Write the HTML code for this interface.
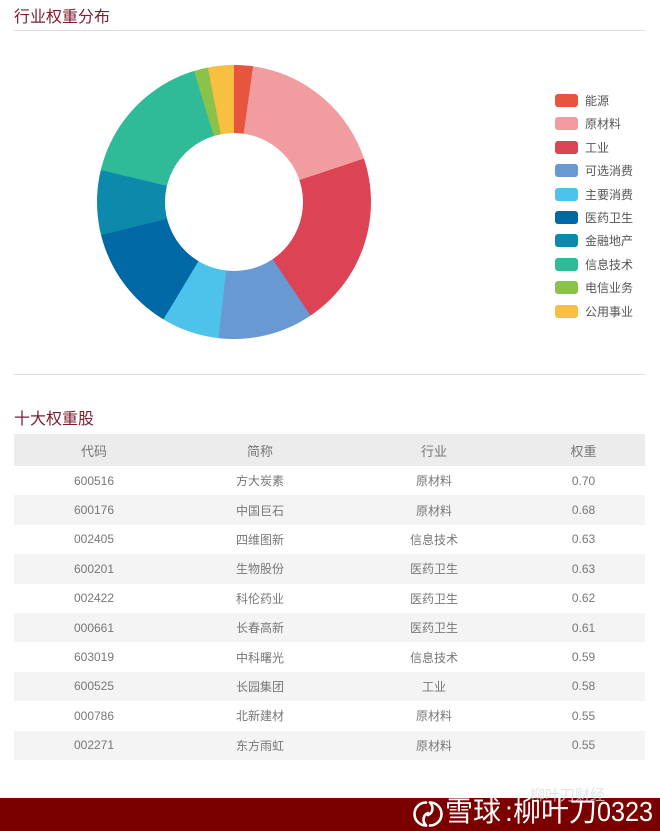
<!DOCTYPE html>
<html><head><meta charset="utf-8"><style>
*{margin:0;padding:0;box-sizing:border-box}
body{width:660px;height:831px;background:#fff;font-family:"Liberation Sans","Noto Sans CJK SC",sans-serif;position:relative;overflow:hidden;color:#666}
.t{position:absolute;left:14px;font-size:16px;color:#7b2030}
.hr{position:absolute;left:14px;width:631px;height:1px;background:#ddd}
.donut{position:absolute;left:97px;top:65px;width:274px;height:274px;border-radius:50%;
background:conic-gradient(#e8553f 0 8deg,#f19c9f 8deg 71.5deg,#dc4355 71.5deg 146deg,#6899d3 146deg 186.5deg,#4dc3eb 186.5deg 211deg,#0068a5 211deg 256deg,#0d8aab 256deg 283.5deg,#2fbb97 283.5deg 343deg,#8bc34a 343deg 349deg,#f8c040 349deg 360deg)}
.hole{position:absolute;left:68px;top:68px;width:138px;height:138px;border-radius:50%;background:#fff}
.lg{position:absolute;left:555px;font-size:12px;color:#555;line-height:14px}
.lg i{display:inline-block;width:23px;height:13px;border-radius:3px;vertical-align:-2px;margin-right:7px}
table{position:absolute;left:14px;top:434px;width:631px;border-collapse:collapse;font-size:12px;color:#777}
th{height:32px;background:#ececec;font-weight:normal;font-size:13px;color:#777}
td{height:29.4px;text-align:center}
table tr:nth-child(2n) td{background:#fff}
table tr:nth-child(2n+1) td{background:#f4f4f4}
.ft{position:absolute;left:0;top:798px;width:660px;height:33px;background:#7a0000}
.fx{position:absolute;top:795px;font-size:28px;line-height:34px;color:#fff;white-space:nowrap}
</style></head><body>
<div class="t" style="top:3px">行业权重分布</div>
<div class="hr" style="top:30px"></div>
<div class="donut"><div class="hole"></div></div>
<div class="lg" style="top:94px"><i style="background:#e8553f"></i>能源</div>
<div class="lg" style="top:117px"><i style="background:#f19c9f"></i>原材料</div>
<div class="lg" style="top:141px"><i style="background:#dc4355"></i>工业</div>
<div class="lg" style="top:164px"><i style="background:#6899d3"></i>可选消费</div>
<div class="lg" style="top:188px"><i style="background:#4dc3eb"></i>主要消费</div>
<div class="lg" style="top:211px"><i style="background:#0068a5"></i>医药卫生</div>
<div class="lg" style="top:234px"><i style="background:#0d8aab"></i>金融地产</div>
<div class="lg" style="top:258px"><i style="background:#2fbb97"></i>信息技术</div>
<div class="lg" style="top:281px"><i style="background:#8bc34a"></i>电信业务</div>
<div class="lg" style="top:305px"><i style="background:#f8c040"></i>公用事业</div>
<div class="hr" style="top:374px"></div>
<div class="t" style="top:405px">十大权重股</div>
<table>
<tr><th style="width:160px">代码</th><th style="width:172px">简称</th><th style="width:176px">行业</th><th>权重</th></tr>
<tr><td>600516</td><td>方大炭素</td><td>原材料</td><td>0.70</td></tr>
<tr><td>600176</td><td>中国巨石</td><td>原材料</td><td>0.68</td></tr>
<tr><td>002405</td><td>四维图新</td><td>信息技术</td><td>0.63</td></tr>
<tr><td>600201</td><td>生物股份</td><td>医药卫生</td><td>0.63</td></tr>
<tr><td>002422</td><td>科伦药业</td><td>医药卫生</td><td>0.62</td></tr>
<tr><td>000661</td><td>长春高新</td><td>医药卫生</td><td>0.61</td></tr>
<tr><td>603019</td><td>中科曙光</td><td>信息技术</td><td>0.59</td></tr>
<tr><td>600525</td><td>长园集团</td><td>工业</td><td>0.58</td></tr>
<tr><td>000786</td><td>北新建材</td><td>原材料</td><td>0.55</td></tr>
<tr><td>002271</td><td>东方雨虹</td><td>原材料</td><td>0.55</td></tr>
</table>
<div class="ft"></div>
<div style="position:absolute;left:530px;top:784px;font-size:15px;color:#ddd;opacity:.8;white-space:nowrap">柳叶刀财经</div>
<svg style="position:absolute;left:413px;top:799px" width="30" height="30" viewBox="0 0 30 30" fill="none" stroke="#fff" stroke-width="2.6" stroke-linecap="round"><path d="M13 3.5A11.5 11.5 0 1 0 13 26.5"/><path d="M13 26.5C9 22 10 16 15 14"/><path d="M17 26.5A11.5 11.5 0 1 0 17 3.5"/><path d="M17 3.5C21 8 20 14 15 16"/></svg>
<div class="fx" style="left:445px">雪球</div>
<div class="fx" style="left:505px">:</div>
<div class="fx" style="left:513px">柳叶刀</div>
<div class="fx" style="left:597px;transform:scaleX(.9);transform-origin:left">0323</div>
</body></html>
